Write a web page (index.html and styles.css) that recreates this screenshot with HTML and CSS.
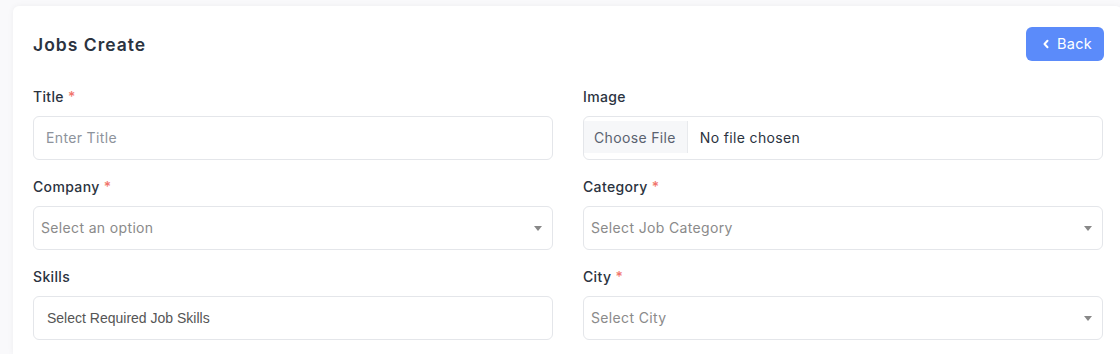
FILE: index.html
```html
<!DOCTYPE html>
<html lang="en">
<head>
<meta charset="utf-8">
<title>Jobs Create</title>
<link rel="stylesheet" href="styles.css">
</head>
<body>
<div class="card">
  <div class="card-head">
    <h1 class="card-title">Jobs Create</h1>
    <a class="btn-back" href="#">
      <svg class="chev" width="8" height="10" viewBox="0 0 8 10"><path d="M5.5 1.8 L2.5 5 L5.5 8.2" fill="none" stroke="#fff" stroke-width="2" stroke-linecap="round" stroke-linejoin="round"/></svg>
      <span>Back</span>
    </a>
  </div>
  <div class="form-grid">
    <div class="field">
      <label class="lbl">Title <span class="req">*</span></label>
      <div class="control"><span class="ph">Enter Title</span></div>
    </div>
    <div class="field">
      <label class="lbl">Image</label>
      <div class="control file">
        <span class="file-btn">Choose File</span>
        <span class="file-name">No file chosen</span>
      </div>
    </div>
    <div class="field">
      <label class="lbl">Company <span class="req">*</span></label>
      <div class="control select"><span class="ph sel-ph">Select an option</span><span class="caret"></span></div>
    </div>
    <div class="field">
      <label class="lbl">Category <span class="req">*</span></label>
      <div class="control select"><span class="ph sel-ph">Select Job Category</span><span class="caret"></span></div>
    </div>
    <div class="field">
      <label class="lbl">Skills</label>
      <div class="control multi"><span class="multi-ph">Select Required Job Skills</span></div>
    </div>
    <div class="field">
      <label class="lbl">City <span class="req">*</span></label>
      <div class="control select"><span class="ph sel-ph">Select City</span><span class="caret"></span></div>
    </div>
  </div>
</div>
</body>
</html>
```

FILE: styles.css
```css
html, body {
  margin: 0;
  padding: 0;
  background: #f9f9fb;
  overflow: hidden;
  height: 354px;
}
body {
  box-sizing: border-box;
  padding: 6px 0 0 13px;
  font-family: "Inter", "Noto Sans", sans-serif;
  color: #2b3340;
}
.card {
  width: 1109px;
  height: 348px;
  box-sizing: border-box;
  background: #fff;
  border-radius: 6px 6px 0 0;
  box-shadow: 0 0 6px rgba(0, 0, 0, 0.05);
  padding: 20px 20px 0 20px;
}
.card-head {
  display: flex;
  justify-content: space-between;
  align-items: center;
  height: 36px;
  margin-bottom: 25px;
}
.card-title {
  margin: 0;
  font-size: 17.5px;
  font-weight: 600;
  letter-spacing: 1px;
  color: #2b3340;
}
.btn-back {
  display: flex;
  align-items: center;
  gap: 7px;
  box-sizing: border-box;
  width: 78px;
  height: 34px;
  padding-left: 16px;
  padding-bottom: 1px;
  margin-right: -2px;
  background: #5b8bfa;
  border-radius: 6px;
  color: #fff;
  text-decoration: none;
  font-size: 14.5px;
  letter-spacing: 0.3px;
}
.form-grid {
  display: grid;
  grid-template-columns: 520px 520px;
  column-gap: 30px;
  row-gap: 17px;
}
.field {
  display: flex;
  flex-direction: column;
}
.lbl {
  font-size: 14px;
  font-weight: 500;
  letter-spacing: 0.35px;
  line-height: 19px;
  margin-bottom: 10px;
  color: #2b3340;
}
.req {
  color: #f1746c;
}
.control {
  box-sizing: border-box;
  height: 44px;
  border: 1px solid #e4e6ea;
  border-radius: 6px;
  display: flex;
  align-items: center;
  padding: 0 12px 2px 12px;
  font-size: 14px;
  letter-spacing: 0.35px;
}
.ph {
  color: #8d939c;
}
.select {
  padding: 0 10px 2px 7px;
  justify-content: space-between;
}
.sel-ph {
  color: #8a8a8a;
}
.caret {
  width: 0;
  height: 0;
  margin-top: 2px;
  border-left: 4px solid transparent;
  border-right: 4px solid transparent;
  border-top: 5px solid #888;
}
.file {
  padding: 0;
  align-items: stretch;
}
.file-btn {
  display: flex;
  align-items: center;
  margin: 4px 0 6px 0;
  padding: 0 11px 0 10px;
  background: #f6f7f9;
  border-right: 1px solid #e8eaed;
  color: #5a6270;
}
.file-name {
  display: flex;
  align-items: center;
  padding-left: 12px;
  padding-bottom: 2px;
  color: #2b3340;
}
.multi {
  padding-bottom: 0;
}
.multi-ph {
  font-family: "Liberation Sans", Arial, sans-serif;
  font-size: 14px;
  letter-spacing: 0;
  color: #555;
  padding-left: 1px;
}
```
